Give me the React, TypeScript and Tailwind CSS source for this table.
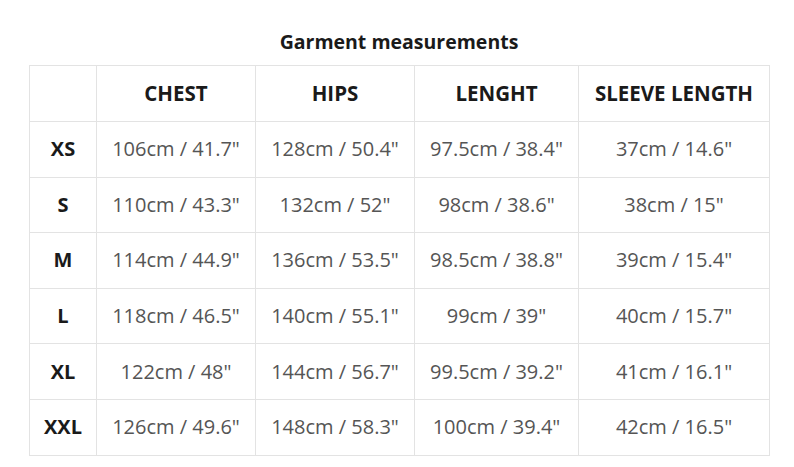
const columns = ["CHEST", "HIPS", "LENGHT", "SLEEVE LENGTH"];

const rows = [
  { size: "XS", values: ['106cm / 41.7"', '128cm / 50.4"', '97.5cm / 38.4"', '37cm / 14.6"'] },
  { size: "S", values: ['110cm / 43.3"', '132cm / 52"', '98cm / 38.6"', '38cm / 15"'] },
  { size: "M", values: ['114cm / 44.9"', '136cm / 53.5"', '98.5cm / 38.8"', '39cm / 15.4"'] },
  { size: "L", values: ['118cm / 46.5"', '140cm / 55.1"', '99cm / 39"', '40cm / 15.7"'] },
  { size: "XL", values: ['122cm / 48"', '144cm / 56.7"', '99.5cm / 39.2"', '41cm / 16.1"'] },
  { size: "XXL", values: ['126cm / 49.6"', '148cm / 58.3"', '100cm / 39.4"', '42cm / 16.5"'] },
];

export default function App() {
  return (
    <div className="w-[794px] h-[467px] bg-white font-['Open_Sans',sans-serif] pt-[29px] pl-[29px]">
      <h1 className="w-[740px] text-center text-[19.5px] leading-[26px] font-bold text-[#1a1a1a] mb-[10px]">
        Garment measurements
      </h1>
      <table className="w-[740px] border-collapse table-fixed">
        <colgroup>
          <col className="w-[67px]" />
          <col className="w-[159px]" />
          <col className="w-[159px]" />
          <col className="w-[164px]" />
          <col className="w-[191px]" />
        </colgroup>
        <thead>
          <tr className="h-[56px]">
            <th className="border border-[#e3e3e3]" />
            {columns.map((c) => (
              <th
                key={c}
                className="border border-[#e3e3e3] text-center text-[20.5px] font-bold text-[#1a1a1a]"
              >
                {c}
              </th>
            ))}
          </tr>
        </thead>
        <tbody>
          {rows.map((r) => (
            <tr key={r.size} className="h-[55.6px]">
              <td className="border border-[#e3e3e3] text-center text-[20px] font-bold text-[#1a1a1a]">
                {r.size}
              </td>
              {r.values.map((v, i) => (
                <td
                  key={i}
                  className="border border-[#e3e3e3] text-center text-[20px] text-[#555555]"
                >
                  {v}
                </td>
              ))}
            </tr>
          ))}
        </tbody>
      </table>
    </div>
  );
}
